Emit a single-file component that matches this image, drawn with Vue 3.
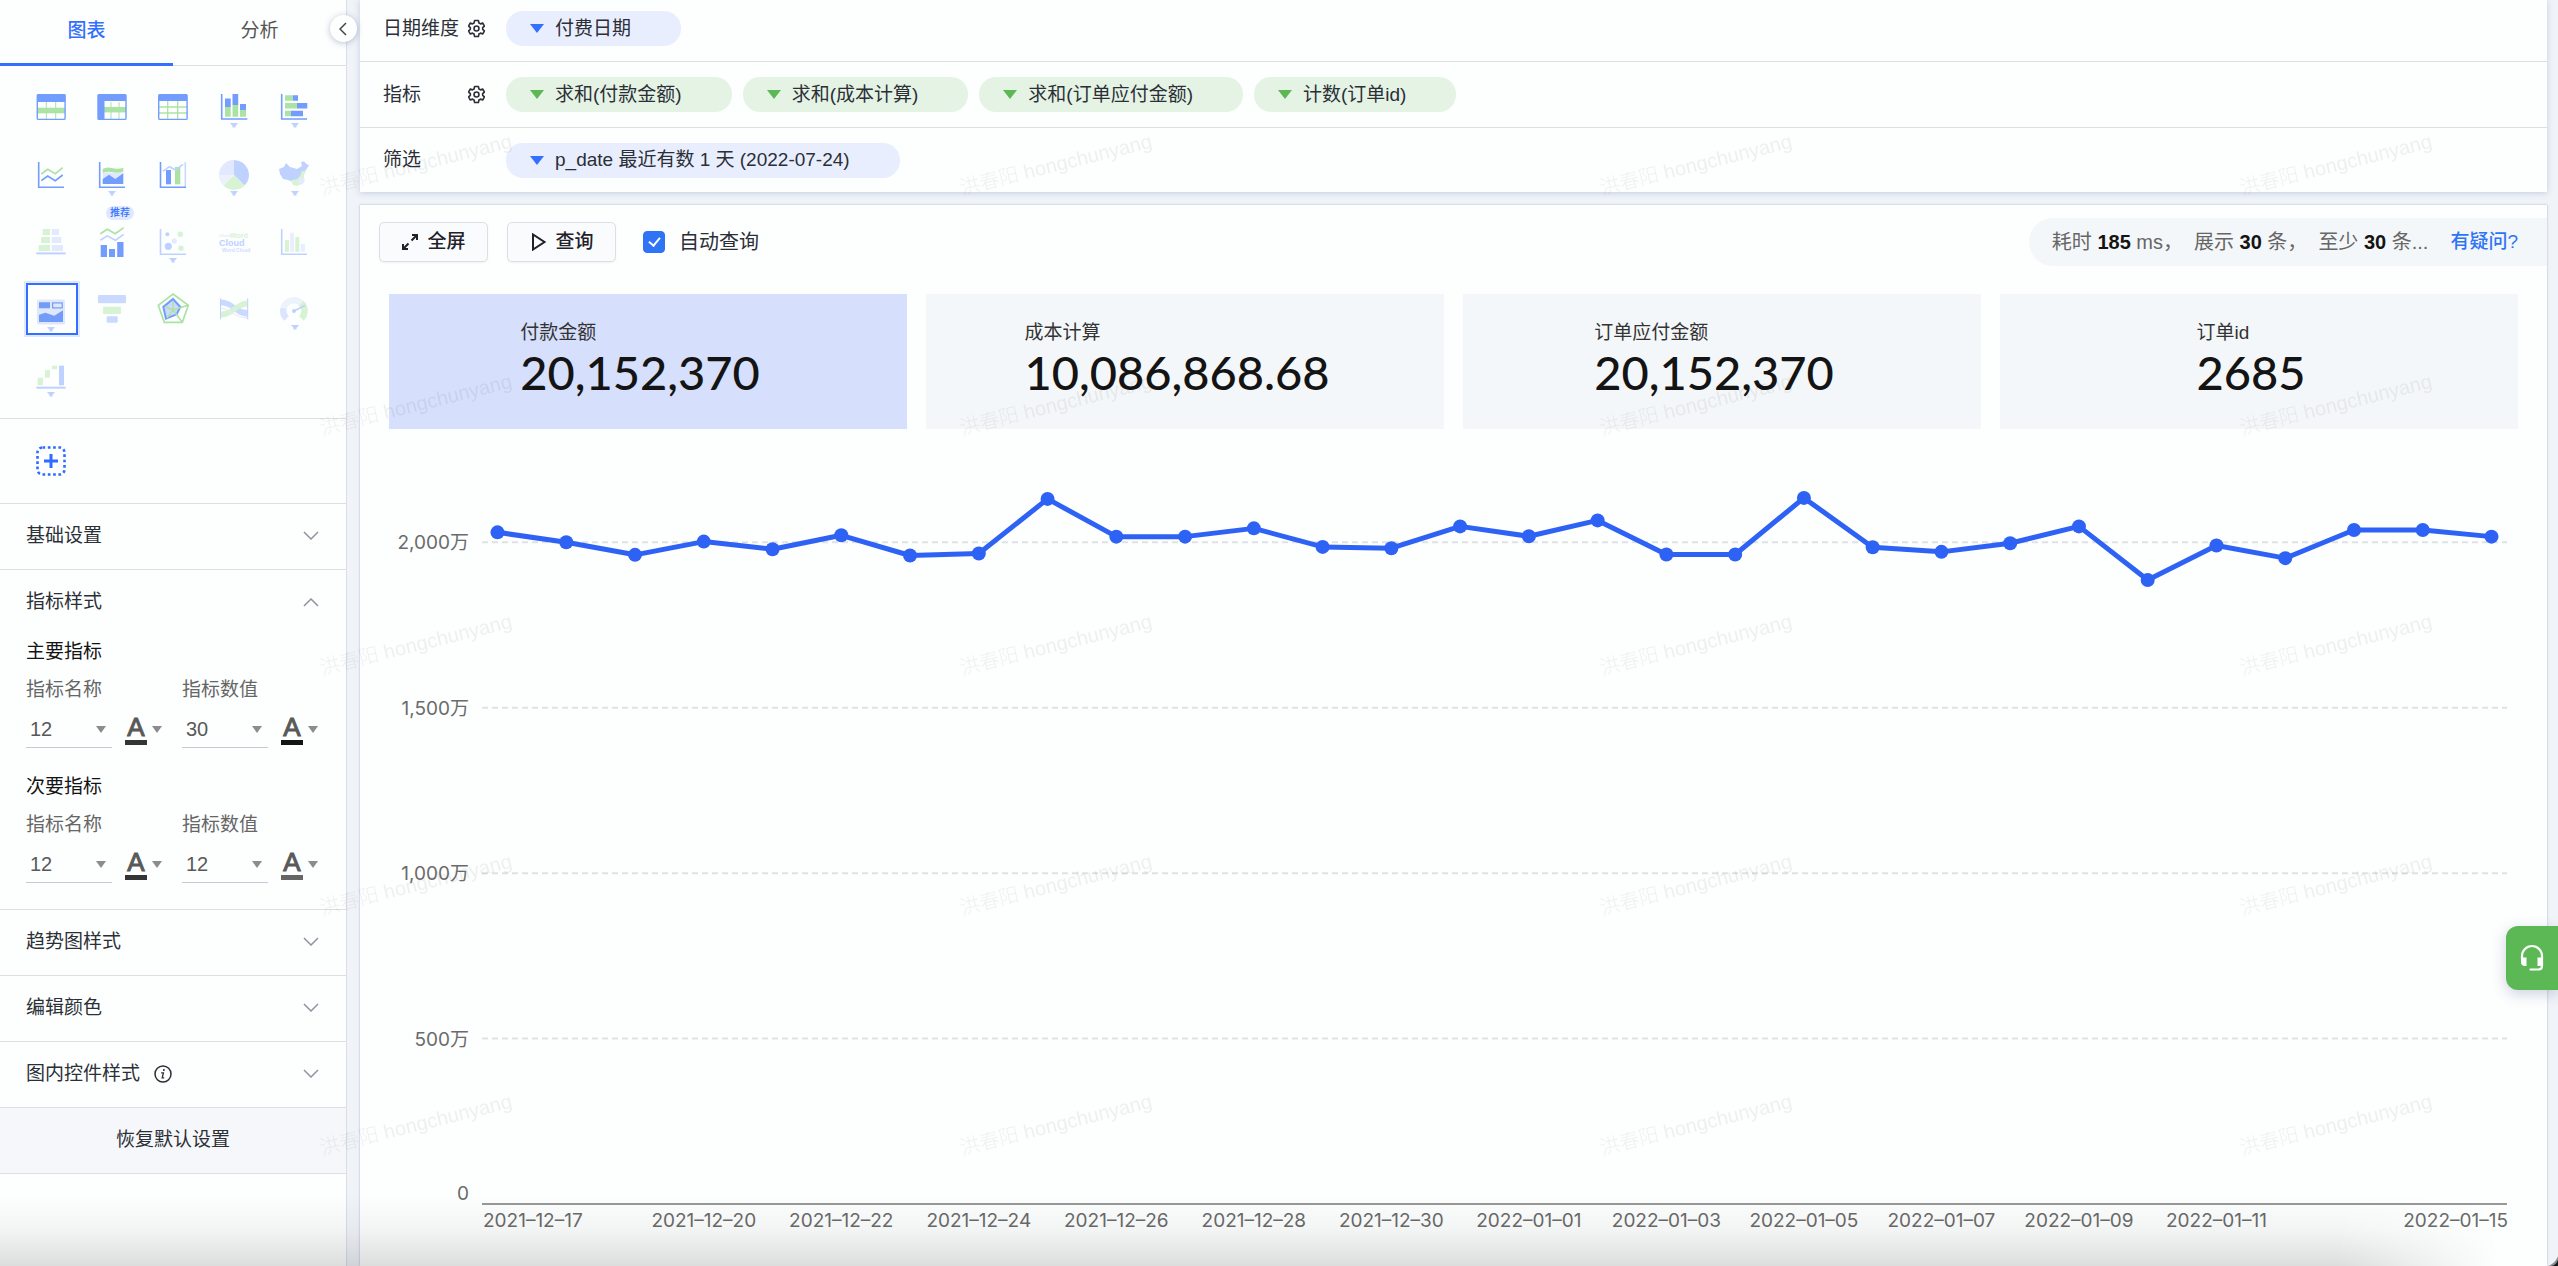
<script setup>
import { ref, computed } from 'vue'

const activeTab = ref('图表')
const selectedChart = ref('trend-card')
const autoQuery = ref(true)

const chartTypes = [
  { id: 'summary-table', name: '汇总表' },
  { id: 'pivot-table', name: '透视表' },
  { id: 'detail-table', name: '明细表' },
  { id: 'stacked-column', name: '柱状图', more: 44 },
  { id: 'stacked-bar', name: '条形图', more: 44 },
  { id: 'line', name: '折线图' },
  { id: 'area', name: '面积图', more: 44 },
  { id: 'combo', name: '双轴图' },
  { id: 'pie', name: '饼图', more: 44 },
  { id: 'map', name: '地图', more: 44 },
  { id: 'pyramid', name: '对比漏斗' },
  { id: 'multi', name: '组合图', badge: '推荐' },
  { id: 'scatter', name: '散点图', more: 43 },
  { id: 'word-cloud', name: '词云' },
  { id: 'histogram', name: '直方图' },
  { id: 'trend-card', name: '指标趋势图', more: 44 },
  { id: 'funnel', name: '漏斗图' },
  { id: 'radar', name: '雷达图' },
  { id: 'sankey', name: '桑基图' },
  { id: 'gauge', name: '仪表盘', more: 42 },
  { id: 'waterfall', name: '瀑布图', more: 41 }
]

const metricGroups = ref([
  {
    title: '主要指标',
    fields: [
      { label: '指标名称', size: '12', color: '#333537' },
      { label: '指标数值', size: '30', color: '#141414' }
    ]
  },
  {
    title: '次要指标',
    fields: [
      { label: '指标名称', size: '12', color: '#333537' },
      { label: '指标数值', size: '12', color: '#666666' }
    ]
  }
])
const sizes = ['12', '14', '16', '20', '24', '30', '36']

const shelves = [
  { label: '日期维度', gear: true, tone: 'blue', pills: ['付费日期'] },
  { label: '指标', gear: true, tone: 'green', pills: ['求和(付款金额)', '求和(成本计算)', '求和(订单应付金额)', '计数(订单id)'] },
  { label: '筛选', gear: false, tone: 'blue', pills: ['p_date 最近有数 1 天 (2022-07-24)'] }
]

const cards = [
  { label: '付款金额', value: '20,152,370', active: true },
  { label: '成本计算', value: '10,086,868.68' },
  { label: '订单应付金额', value: '20,152,370' },
  { label: '订单id', value: '2685' }
]

// Daily amounts in units of 万, 2021-12-17 to 2022-01-15
const amounts = [
  2030, 2000, 1962, 2002, 1979, 2021, 1960, 1966, 2131, 2017,
  2017, 2042, 1986, 1982, 2048, 2018, 2066, 1963, 1963, 2134,
  1985, 1971, 1997, 2048, 1886, 1990, 1952, 2037, 2037, 2017
]
const axisMax = 2300
const yAt = v => (1 - v / axisMax) * 100 + '%'
const xAt = i => 0.765 + (i * 98.47) / (amounts.length - 1) + '%'
const points = computed(() => amounts.map((v, i) => ({ x: xAt(i), y: yAt(v) })))
const gridLines = [
  { value: 2000, label: '2,000万' },
  { value: 1500, label: '1,500万' },
  { value: 1000, label: '1,000万' },
  { value: 500, label: '500万' }
]
const dates = [
  { i: 3, text: '2021–12–20' },
  { i: 5, text: '2021–12–22' },
  { i: 7, text: '2021–12–24' },
  { i: 9, text: '2021–12–26' },
  { i: 11, text: '2021–12–28' },
  { i: 13, text: '2021–12–30' },
  { i: 15, text: '2022–01–01' },
  { i: 17, text: '2022–01–03' },
  { i: 19, text: '2022–01–05' },
  { i: 21, text: '2022–01–07' },
  { i: 23, text: '2022–01–09' },
  { i: 25, text: '2022–01–11' }
]
</script>

<template>
  <div class="page">
    <aside class="sidebar">
      <nav class="tabs">
        <button
          v-for="t in ['图表', '分析']"
          :key="t"
          class="tab"
          :class="{ active: activeTab === t }"
          @click="activeTab = t"
        >{{ t }}</button>
      </nav>

      <div class="chart-grid">
        <button
          v-for="c in chartTypes"
          :key="c.id"
          class="chart-type"
          :class="{ selected: selectedChart === c.id }"
          :aria-label="c.name"
          @click="selectedChart = c.id"
        >
          <svg width="52" height="52" viewBox="0 0 52 52" fill="none">
            <template v-if="c.id === 'summary-table'">
              <path d="M20.3 23v17M29.7 23v17" stroke="#abe3a4" />
              <path d="M11 28.7h28v5.6H11z" fill="#abe3a4" />
              <rect x="11.3" y="15.6" width="27.8" height="24.8" rx="1" stroke="#739cff" stroke-width="1.4" />
              <path d="M11 15.5h28.4V23H11z" fill="#739cff" />
            </template>
            <template v-else-if="c.id === 'pivot-table'">
              <path d="M24 23v17M32 23v17" stroke="#abe3a4" />
              <path d="M17 28h22v5.4H17z" fill="#abe3a4" />
              <rect x="11" y="15.6" width="28" height="24.8" rx="1" stroke="#739cff" stroke-width="1.4" />
              <path d="M11 15.5h28V22H17.5v18.4H11z" fill="#739cff" />
            </template>
            <template v-else-if="c.id === 'detail-table'">
              <path d="M19.7 22v18M29.7 22v18M11 28h28M11 34h28" stroke="#abe3a4" stroke-width="1.3" />
              <rect x="10.7" y="15.6" width="28.4" height="24.8" rx="1" stroke="#739cff" stroke-width="1.4" />
              <path d="M11 15.5h28V22H11z" fill="#739cff" />
            </template>
            <template v-else-if="c.id === 'stacked-column'">
              <path d="M12.7 15v25h25.6" stroke="#739cff" stroke-width="1.6" />
              <path d="M16 28h5.7v9.7H16zM23.5 26h5.7v11.7h-5.7zM31 31h6v6.7h-6z" fill="#abe3a4" />
              <path d="M16 19.5h5.7V28H16zM23.5 15h5.7v11h-5.7zM31 25h6v6h-6z" fill="#739cff" />
            </template>
            <template v-else-if="c.id === 'stacked-bar'">
              <path d="M11.7 15v25H37" stroke="#739cff" stroke-width="1.6" />
              <path d="M15 16.3h8v5.5h-8zM15 24h12v5.6H15zM15 31.7h6v5.5h-6z" fill="#abe3a4" />
              <path d="M23 16.3h5v5.5h-5zM27 24h10.3v5.6H27zM21 31.7h12v5.5H21z" fill="#739cff" />
            </template>
            <template v-else-if="c.id === 'line'">
              <path d="M12.7 15v25.3H38" stroke="#739cff" stroke-width="1.6" />
              <path d="M15.3 27l6.4-4.7 7.6 4.4 7.4-6" stroke="#abe3a4" stroke-width="1.6" />
              <path d="M15.3 33.7l6.4-4.7 7.6 4.7 7.4-5.7" stroke="#739cff" stroke-width="1.6" />
            </template>
            <template v-else-if="c.id === 'area'">
              <path d="M12.7 15v25.3H38" stroke="#739cff" stroke-width="1.6" />
              <path d="M15.7 26q4-1 7-.5t13.6 0V30l-8 5H15.7z" fill="#e0e8fd" />
              <path d="M15.7 22q4-2.5 9-1t11.6 0v3.4q-5 2-10.6.8t-10 .8z" fill="#abe3a4" />
              <path d="M15.7 32l6.3-4.3 6.3 4.3 8-5.7V37H15.7z" fill="#739cff" />
            </template>
            <template v-else-if="c.id === 'combo'">
              <path d="M37.3 15v25" stroke="#cbd9ff" stroke-width="1.6" />
              <path d="M18 23h5v14.3h-5z" fill="#739cff" />
              <path d="M27 20h5.3v17.3H27z" fill="#abe3a4" />
              <path d="M12.5 15v25.3H38" stroke="#739cff" stroke-width="1.6" />
              <path d="M15 24.3l6.3-4.6 6.4 3.3 7.3-5.7" stroke="#bfd1ff" stroke-width="1.6" />
            </template>
            <template v-else-if="c.id === 'pie'">
              <path d="M25 28V13a15 15 0 0 1 10.6 25.6z" fill="#bfd1ff" />
              <path d="M25 28l10.6 10.6a15 15 0 0 1-21.2 0z" fill="#d8f2d4" />
              <path d="M25 28H10a15 15 0 0 0 4.4 10.6z" fill="#ecf1fe" />
              <path d="M25 28H10A15 15 0 0 1 25 13z" fill="#e2e8fd" />
            </template>
            <template v-else-if="c.id === 'map'">
              <path d="M9 22l5-2 2-4 4 4 7 2 5-3-1-4 3-.5 3 3 2 .5-3 5-4 3 1 2-3 3-7 4-5-2-5-1-3-5z" fill="#bfd1ff" />
              <path d="M36 24h-4l-2 5-3 3-6 1 2 5 4 1 4-2 3-5v-4z" fill="#d8f2d4" />
              <path d="M32 30l-4 3 1 5 4-1 2-5z" fill="#e4eafe" />
            </template>
            <template v-else-if="c.id === 'pyramid'">
              <path d="M16.7 14H24v6h-7.3zM15 22h9v6h-9zM12.7 30H24v6H12.7z" fill="#d8f2d4" />
              <path d="M25.7 14H33v6h-7.3zM25.7 22h9.6v6h-9.6zM25.7 30H37v6H25.7z" fill="#e4eafe" />
              <path d="M10.3 38.4h29.4" stroke="#bfd1ff" stroke-width="2" />
            </template>
            <template v-else-if="c.id === 'multi'">
              <path d="M13.3 18.7l7-4.4 8 4.4 8.4-6" stroke="#abe3a4" stroke-width="1.6" />
              <path d="M13.3 25.3l7-4.4 8 4.4 8.4-6" stroke="#bfd1ff" stroke-width="1.6" />
              <path d="M13.7 30H20v12h-6.3zM22 34h6v8h-6zM30.2 27h6.3v15h-6.3z" fill="#739cff" />
            </template>
            <template v-else-if="c.id === 'scatter'">
              <path d="M12.5 14v25.3H38" stroke="#bfd1ff" stroke-width="1.6" />
              <circle cx="19.3" cy="19.3" r="2" fill="#bfd1ff" />
              <circle cx="20.3" cy="31.3" r="3.6" fill="#bfd1ff" />
              <circle cx="26.3" cy="26" r="2.6" fill="#e4eafe" />
              <circle cx="32.3" cy="19.3" r="2.7" fill="#d8f2d4" />
              <circle cx="33" cy="33.3" r="2.7" fill="#d8f2d4" />
            </template>
            <template v-else-if="c.id === 'word-cloud'">
              <g class="cloud">
                <text x="10" y="22" font-size="4" fill="#e4eafe">Cloud</text>
                <text x="21" y="22.6" font-size="7" fill="#d8f2d4">Word</text>
                <text x="10" y="31" font-size="9" fill="#bfd1ff">Cloud</text>
                <text x="13" y="36.6" font-size="5" fill="#cfdcff">Word Cloud</text>
              </g>
            </template>
            <template v-else-if="c.id === 'histogram'">
              <path d="M11.7 14v25.3H37" stroke="#bfd1ff" stroke-width="1.6" />
              <path d="M15 25h4v11.7h-4zM25.3 22h4v14.7h-4z" fill="#d8f2d4" />
              <path d="M20 17.7h4v19h-4zM30.7 29H35v7.7h-4.3z" fill="#e9effe" />
            </template>
            <template v-else-if="c.id === 'trend-card'">
              <rect x="11" y="16.5" width="28" height="25" rx="2" fill="#dfe7fa" />
              <path d="M13 19.3h11v6H13zM13 31.7l6.3-2 9 3 8.7-5.4V39H13z" fill="#739cf8" />
              <rect x="26.6" y="19.9" width="9.6" height="5" stroke="#739cf8" stroke-width="1.2" />
            </template>
            <template v-else-if="c.id === 'funnel'">
              <rect x="11" y="12" width="28" height="8.3" rx="1" fill="#cbd9ff" />
              <rect x="16" y="23.7" width="18" height="7.3" rx="1" fill="#d8f2d4" />
              <rect x="19.7" y="33.3" width="11" height="6.5" rx="1" fill="#cbd9ff" />
            </template>
            <template v-else-if="c.id === 'radar'">
              <path d="M25 16l7.3 8-3.6 7.3L18 35.7 15.3 24z" fill="#cddafb" stroke="#739cff" stroke-width="2" />
              <path d="M25 11l15.3 11.3-6 17h-18l-6-17z" stroke="#abe3a4" stroke-width="1.7" />
              <path d="M25 27v-9M25 27l15-4.7M25 27l9.3 12.3M25 27l-6 8M25 27l-8-3.5" stroke="#abe3a4" stroke-width="1.5" />
            </template>
            <template v-else-if="c.id === 'sankey'">
              <path d="M12 16.5C24 16.5 27 27 38.5 27v6.5C26 33.5 24 22.5 12 22.5z" fill="#cbd9ff" />
              <path d="M12 28.5c11 0 16-11 26.5-11v6.2C27 23.7 24 34.5 12 34.5z" fill="#d8f2d4" />
              <path d="M12 25.5c9 0 14 9.5 26.5 9.5" stroke="#e4eafe" />
              <path d="M11.5 15.3v21M38.7 15.3v21" stroke="#bfd1ff" />
            </template>
            <template v-else-if="c.id === 'gauge'">
              <path d="M16.6 35.4A10.6 10.6 0 0 1 13.7 25" stroke="#dbe5fd" stroke-width="6.5" />
              <path d="M13.7 25A10.6 10.6 0 0 1 31 20" stroke="#eef2fd" stroke-width="6.5" />
              <path d="M31 20A10.6 10.6 0 0 1 31.4 35.4" stroke="#d8f2d4" stroke-width="6.5" />
              <circle cx="24" cy="28" r="2" fill="#bfd1ff" />
              <path d="M24 28l11-5.5" stroke="#bfd1ff" stroke-width="1.8" />
            </template>
            <template v-else>
              <path d="M11.7 26.7H17v7.6h-5.3zM19 19h5v7.7h-5zM26 14.7h5v3.6h-5z" fill="#d8f2d4" />
              <path d="M33 14.7h5v19.6h-5z" fill="#bfd1ff" />
              <path d="M10.3 36.7h29.4" stroke="#bfd1ff" stroke-width="2" />
            </template>
            <path v-if="c.more" :d="`M21 ${c.more}h8l-2.5 3v1.5h-3v-1.5z`" fill="#bfd1ff" />
          </svg>
          <span v-if="c.badge" class="badge">{{ c.badge }}</span>
        </button>
      </div>

      <div class="add-row">
        <button class="add" aria-label="添加图表">
          <svg width="30" height="30" viewBox="0 0 30 30" fill="none" stroke="#2f6bff">
            <rect x="1.5" y="1.5" width="27" height="27" rx="5" stroke-width="2.6" stroke-dasharray="2.7 2.6" />
            <path d="M15 8v14M8 15h14" stroke-width="3" />
          </svg>
        </button>
      </div>

      <button class="section">
        <span>基础设置</span>
        <svg class="chev" viewBox="0 0 16 9"><path d="M1 1l7 7 7-7" /></svg>
      </button>

      <section class="metric-style">
        <button class="section open">
          <span>指标样式</span>
          <svg class="chev" viewBox="0 0 16 9"><path d="M1 8l7-7 7 7" /></svg>
        </button>
        <div v-for="(g, gi) in metricGroups" :key="g.title" class="group">
          <h3>{{ g.title }}</h3>
          <div class="fields">
            <div v-for="(f, fi) in g.fields" :key="fi" class="field">
              <label :for="`size-${gi}-${fi}`">{{ f.label }}</label>
              <div class="controls">
                <div class="select-box">
                  <select :id="`size-${gi}-${fi}`" v-model="f.size">
                    <option v-for="s in sizes" :key="s">{{ s }}</option>
                  </select>
                  <svg class="caret" viewBox="0 0 10 7"><path d="M0 0h10L5 7z" /></svg>
                </div>
                <button class="color" aria-label="文字颜色">
                  <span class="swatch" :style="{ borderColor: f.color }">A</span>
                  <svg class="caret" viewBox="0 0 10 7"><path d="M0 0h10L5 7z" /></svg>
                </button>
              </div>
            </div>
          </div>
        </div>
      </section>

      <button class="section">
        <span>趋势图样式</span>
        <svg class="chev" viewBox="0 0 16 9"><path d="M1 1l7 7 7-7" /></svg>
      </button>
      <button class="section">
        <span>编辑颜色</span>
        <svg class="chev" viewBox="0 0 16 9"><path d="M1 1l7 7 7-7" /></svg>
      </button>
      <button class="section">
        <span>图内控件样式</span>
        <svg class="info" viewBox="0 0 18 18" fill="none" stroke="#2b2f36">
          <circle cx="9" cy="9" r="8" stroke-width="1.5" />
          <path d="M7.2 7.8h2.2l-1.2 5h2" stroke-width="1.3" />
          <circle cx="9.9" cy="5" r="1" fill="#2b2f36" stroke="none" />
        </svg>
        <svg class="chev" viewBox="0 0 16 9"><path d="M1 1l7 7 7-7" /></svg>
      </button>
      <button class="reset">恢复默认设置</button>

      <button class="collapse" aria-label="收起">
        <svg width="8" height="14" viewBox="0 0 8 14"><path d="M7 1L1 7l6 6" fill="none" stroke="#444" stroke-width="1.5" /></svg>
      </button>
    </aside>

    <main class="main">
      <section class="shelves">
        <div v-for="s in shelves" :key="s.label" class="shelf">
          <div class="shelf-label">
            <span>{{ s.label }}</span>
            <svg v-if="s.gear" width="17" height="19" viewBox="0 0 18 20" fill="none" stroke="#2b2f36" stroke-width="1.7" stroke-linejoin="round">
              <path d="M7 1.5h4l.6 2.7 1.6.9 2.5-.9 1.7 3.2-1.9 1.7v1.8l1.9 1.7-1.7 3.2-2.5-.9-1.6.9-.6 2.7H7l-.6-2.7-1.6-.9-2.500.9-1.7-3.2 1.9-1.7V9.100L.6 7.400l1.7-3.2 2.500.9 1.600-.9z" />
              <circle cx="9" cy="10" r="2.6" />
            </svg>
          </div>
          <div class="pills">
            <button v-for="p in s.pills" :key="p" class="pill" :class="s.tone">
              <svg width="14" height="9" viewBox="0 0 14 9"><path d="M0 0h14L7 9z" fill="currentColor" /></svg>
              <span>{{ p }}</span>
            </button>
          </div>
        </div>
      </section>

      <section class="panel">
        <div class="toolbar">
          <button class="btn">
            <svg width="18" height="18" viewBox="0 0 18 18" fill="none" stroke="#1f2329" stroke-width="2">
              <path d="M11 2h5v5M16 2l-5.500 5.500M7 16H2v-5M2 16l5.500-5.500" />
            </svg>
            <span>全屏</span>
          </button>
          <button class="btn">
            <svg width="18" height="18" viewBox="0 0 18 18" fill="none" stroke="#1f2329" stroke-width="2">
              <path d="M4 1.5v15L15.5 9z" />
            </svg>
            <span>查询</span>
          </button>
          <label class="check">
            <input v-model="autoQuery" type="checkbox" />
            <span>自动查询</span>
          </label>
          <div class="stats">
            <span>耗时 <b>185</b> ms，</span>
            <span>展示 <b>30</b> 条，</span>
            <span class="last">至少 <b>30</b> 条...</span>
            <a href="#">有疑问?</a>
          </div>
        </div>

        <div class="cards">
          <button v-for="c in cards" :key="c.label" class="card" :class="{ active: c.active }">
            <span class="card-body">
              <span class="card-label">{{ c.label }}</span>
              <span class="card-value">{{ c.value }}</span>
            </span>
          </button>
        </div>

        <div class="chart">
          <svg class="plot">
            <g v-for="g in gridLines" :key="g.value">
              <line x1="0" x2="100%" :y1="yAt(g.value)" :y2="yAt(g.value)" class="grid" />
              <text x="-13" :y="yAt(g.value)" dy="7" text-anchor="end">{{ g.label }}</text>
            </g>
            <text x="-13" y="100%" dy="-4" text-anchor="end">0</text>
            <line x1="0" x2="100%" y1="100%" y2="100%" class="axis" />
            <line
              v-for="i in points.length - 1"
              :key="'l' + i"
              :x1="points[i - 1].x" :y1="points[i - 1].y"
              :x2="points[i].x" :y2="points[i].y"
              class="series"
            />
            <circle v-for="(p, i) in points" :key="'p' + i" :cx="p.x" :cy="p.y" r="7" class="dot" />
            <text x="1" y="100%" dy="23">2021–12–17</text>
            <text v-for="d in dates" :key="d.i" :x="xAt(d.i)" y="100%" dy="23" text-anchor="middle">{{ d.text }}</text>
            <text x="100%" y="100%" dx="1" dy="23" text-anchor="end">2022–01–15</text>
          </svg>
        </div>
      </section>
    </main>

    <svg class="watermark" aria-hidden="true">
      <defs>
        <pattern id="wm" x="300" y="60" width="640" height="240" patternUnits="userSpaceOnUse">
          <text x="22" y="135" transform="rotate(-14 22 135)">洪春阳 hongchunyang</text>
        </pattern>
      </defs>
      <rect width="100%" height="100%" fill="url(#wm)" />
    </svg>
    <div class="shade"></div>
    <svg class="corner" width="10" height="10" viewBox="0 0 10 10" aria-hidden="true">
      <path d="M10 0v10H0C4 9 9 4 10 0z" fill="#8b8d90" />
      <path d="M10 4v6H4C7 9 9 7 10 4z" fill="#16181a" />
    </svg>
    <button class="service" aria-label="在线客服">
      <svg width="24" height="28" viewBox="0 0 24 28" fill="none" stroke="#fff" stroke-width="2.2">
        <path d="M2 14.5V12a10 10 0 0 1 20 0v10q0 3.5-3.5 3.5h-8" stroke-linecap="round" />
        <path d="M1 13.5h5.5V22H5q-4 0-4-4zM23 13.5h-5.5V22H19q4 0 4-4z" fill="#fff" stroke="none" />
      </svg>
    </button>
  </div>
</template>

<style>
body {
  margin: 0;
  background: #fdfefe;
}
</style>

<style scoped>
.page {
  position: relative;
  display: flex;
  min-height: 100vh;
  overflow: hidden;
  background: #f0f3f8;
  color: #2b2f36;
  font: 19px/28px "Liberation Sans", "Noto Sans CJK SC", sans-serif;
}
button,
select {
  margin: 0;
  padding: 0;
  border: 0;
  background: none;
  color: inherit;
  font: inherit;
  cursor: pointer;
}
svg {
  display: block;
  flex: none;
}

/* sidebar */
.sidebar {
  position: relative;
  flex: none;
  width: 346px;
  border-right: 1px solid #dadfe6;
  background: #fdfefe;
}
.tabs {
  display: flex;
  height: 65px;
  border-bottom: 1px solid #dadfe6;
}
.tab {
  flex: 1;
  padding-bottom: 3px;
  color: #555;
}
.tab.active {
  margin-bottom: -1px;
  padding-bottom: 1px;
  border-bottom: 3px solid #3370ff;
  color: #3370ff;
  font-weight: 500;
}
.chart-grid {
  display: grid;
  grid-template-columns: repeat(5, 52px);
  gap: 16px 9px;
  padding: 13px 0 15px 26px;
  border-bottom: 1px solid #dadfe6;
}
.chart-type {
  position: relative;
  width: 52px;
  height: 52px;
}
.chart-type.selected {
  box-shadow: inset 0 0 0 2px #3370ff, 0 0 0 2px #dfe8fd;
}
.cloud {
  font-weight: 700;
}
.badge {
  position: absolute;
  top: -9px;
  left: 19px;
  width: 28px;
  border-radius: 7px;
  background: #dfe8fd;
  color: #3370ff;
  font-size: 10px;
  font-weight: 500;
  line-height: 14px;
}
.add-row {
  padding: 27px 36px;
  border-bottom: 1px solid #dadfe6;
}
.add {
  display: block;
}
.section {
  display: flex;
  align-items: center;
  width: 100%;
  height: 66px;
  padding: 0 27px 2px 26px;
  border-bottom: 1px solid #dadfe6;
  text-align: left;
}
.section.open {
  border-bottom: 0;
}
.chev {
  width: 16px;
  height: 9px;
  margin-left: auto;
  fill: none;
  stroke: #8f959e;
  stroke-width: 1.5;
}
.info {
  width: 18px;
  height: 18px;
  margin-left: 14px;
}
.metric-style {
  padding-bottom: 3px;
  border-bottom: 1px solid #dadfe6;
}
.group {
  padding: 2px 0 23px 26px;
}
h3 {
  margin: 0;
  color: #141414;
  font-size: 19px;
  font-weight: 400;
  line-height: 28px;
}
.fields {
  display: flex;
  margin-top: 10px;
}
.field {
  width: 156px;
}
label {
  color: #666;
}
.controls {
  display: flex;
  align-items: center;
  margin-top: 7px;
}
.select-box {
  display: flex;
  align-items: center;
  width: 86px;
  height: 36px;
  border-bottom: 1px solid #c5cbd6;
}
.select-box select {
  flex: 1;
  height: 36px;
  margin-right: -16px;
  padding-left: 4px;
  appearance: none;
  color: #595959;
  font-size: 20px;
}
.caret {
  width: 10px;
  height: 7px;
  margin-right: 6px;
  fill: #8c8c8c;
  pointer-events: none;
}
.color {
  display: flex;
  align-items: center;
  margin-left: 13px;
}
.swatch {
  width: 22px;
  margin-right: 5px;
  border-bottom: 5px solid;
  color: #595959;
  font-size: 26px;
  line-height: 26px;
  -webkit-text-stroke: 1px #595959;
}
.reset {
  width: 100%;
  height: 66px;
  padding-bottom: 2px;
  border-bottom: 1px solid #dadfe6;
  background: #f5f7fa;
}
.collapse {
  position: absolute;
  top: 15px;
  right: -11px;
  display: flex;
  align-items: center;
  justify-content: center;
  width: 27px;
  height: 27px;
  padding-right: 2px;
  border-radius: 50%;
  background: #fdfefe;
  box-shadow: 0 1px 6px rgba(60, 80, 130, 0.35);
}

/* main */
.main {
  display: flex;
  flex: 1;
  flex-direction: column;
  min-width: 0;
  margin: 0 11px 0 13px;
}
.shelves {
  background: #fdfefe;
  box-shadow: 0 1px 6px rgba(90, 115, 170, 0.3);
}
.shelf {
  display: flex;
  align-items: center;
  height: 65px;
  padding-left: 23px;
  border-bottom: 1px solid #dadfe6;
}
.shelf:first-child {
  height: 57px;
  padding-bottom: 4px;
}
.shelf:last-child {
  height: 64px;
  border-bottom: 0;
}
.shelf-label {
  display: flex;
  align-items: center;
  justify-content: space-between;
  width: 102px;
  margin-right: 21px;
}
.pills {
  display: flex;
  gap: 11px;
}
.pill {
  display: flex;
  align-items: center;
  gap: 11px;
  height: 35px;
  padding: 0 50px 0 24px;
  border-radius: 17px;
}
.pill.blue {
  background: #e9eefe;
}
.pill.green {
  background: #e5f3e5;
}
.pill.blue svg {
  color: #3370ff;
}
.pill.green svg {
  color: #5cb855;
}
.panel {
  display: flex;
  flex: 1;
  flex-direction: column;
  margin-top: 13px;
  background: #fdfefe;
  box-shadow: 0 0 2px rgba(90, 115, 170, 0.5);
}
.toolbar {
  display: flex;
  align-items: center;
  height: 48px;
  padding: 13px 0 0 19px;
}
.btn {
  display: flex;
  align-items: center;
  justify-content: center;
  gap: 8px;
  box-sizing: border-box;
  width: 109px;
  height: 40px;
  margin-right: 19px;
  border: 1px solid #dcdfe5;
  border-radius: 5px;
  background: #fafbfc;
  box-shadow: 0 1px 2px rgba(0, 0, 0, 0.06);
  color: #1f2329;
  font-weight: 500;
}
.check {
  display: flex;
  align-items: center;
  gap: 14px;
  margin-left: 8px;
  color: #2b2f36;
  font-size: 20px;
}
.check input {
  display: grid;
  place-items: center;
  width: 22px;
  height: 22px;
  margin: 0;
  border: 1px solid #c5cbd6;
  border-radius: 4px;
  appearance: none;
}
.check input:checked {
  border-color: #2f74f5;
  background: #2f74f5;
}
.check input:checked::after {
  width: 5px;
  height: 9px;
  margin-bottom: 3px;
  border: solid #fff;
  border-width: 0 2px 2px 0;
  content: "";
  transform: rotate(40deg);
}
.stats {
  display: flex;
  align-items: center;
  height: 48px;
  margin-left: auto;
  padding: 0 29px 0 23px;
  border-radius: 24px 0 0 24px;
  background: #f4f7f9;
  color: #666;
  font-size: 20px;
}
.stats span {
  margin-right: 11px;
}
.stats .last {
  margin-right: 22px;
}
.stats b {
  color: #141414;
}
.stats a {
  color: #2f74f5;
  font-size: 19px;
  font-weight: 500;
  text-decoration: none;
}
.cards {
  display: grid;
  grid-template-columns: repeat(4, 1fr);
  gap: 19px;
  margin: 28px 29px 0;
}
.card {
  display: flex;
  justify-content: center;
  height: 135px;
  padding: 25px 16px 0 0;
  background: #f4f7f9;
  text-align: left;
}
.card.active {
  background: #d6dffc;
}
.card-body {
  display: flex;
  flex-direction: column;
}
.card-label {
  color: #333;
}
.card-value {
  color: #141414;
  font: 500 47px/50px Lato, "Noto Sans CJK SC", sans-serif;
}
.chart {
  display: flex;
  flex: 1;
  min-height: 320px;
  margin: 14px 40px 0 122px;
  padding-bottom: 62px;
}
.plot {
  flex: 1;
  min-width: 0;
  overflow: visible;
}
.plot text {
  fill: #6b6b6b;
  font: 19px Inter, "Noto Sans CJK SC", sans-serif;
}
.grid {
  stroke: #dfe2e5;
  stroke-width: 2;
  stroke-dasharray: 6 4;
}
.axis {
  stroke: #999;
  stroke-width: 2;
}
.series {
  stroke: #2e62f4;
  stroke-width: 5;
  stroke-linecap: round;
}
.dot {
  fill: #2e62f4;
}

/* overlays */
.watermark {
  position: absolute;
  inset: 0;
  width: 100%;
  height: 100%;
  pointer-events: none;
}
.watermark text {
  fill: rgba(0, 0, 0, 0.06);
  font: 300 20px "Liberation Sans", "Noto Sans CJK SC", sans-serif;
}
.shade {
  position: absolute;
  right: 0;
  bottom: 0;
  left: 0;
  height: 72px;
  background: linear-gradient(rgba(0, 0, 0, 0), rgba(0, 0, 0, 0.04) 50%, rgba(0, 0, 0, 0.13));
  mask-image: linear-gradient(to left, transparent 60px, #000 220px);
  pointer-events: none;
}
.corner {
  position: absolute;
  right: 0;
  bottom: 0;
}
.service {
  position: fixed;
  right: 0;
  bottom: 276px;
  display: flex;
  align-items: center;
  justify-content: center;
  width: 52px;
  height: 64px;
  border-radius: 12px 0 0 12px;
  background: #5cb855;
  box-shadow: 0 4px 14px rgba(60, 80, 130, 0.25);
}
</style>
